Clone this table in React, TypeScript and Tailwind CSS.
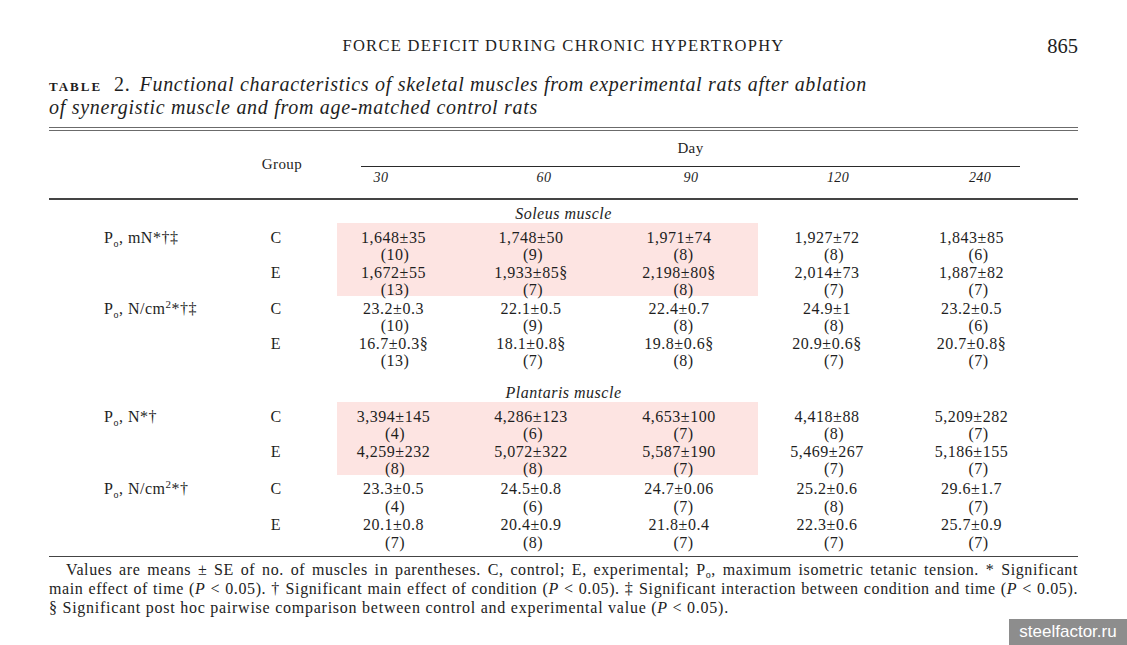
import React from "react";

type Cell = { v: string; n: string };
type Block = { label: React.ReactNode; pink: boolean; c: Cell[]; e: Cell[] };

const Po = () => (
  <>
    P<sub className="text-[10px] align-[-2px]">o</sub>
  </>
);

const blocksSoleus: Block[] = [
  {
    label: (
      <>
        <Po />, mN*†‡
      </>
    ),
    pink: true,
    c: [
      { v: "1,648±35", n: "(10)" },
      { v: "1,748±50", n: "(9)" },
      { v: "1,971±74", n: "(8)" },
      { v: "1,927±72", n: "(8)" },
      { v: "1,843±85", n: "(6)" },
    ],
    e: [
      { v: "1,672±55", n: "(13)" },
      { v: "1,933±85§", n: "(7)" },
      { v: "2,198±80§", n: "(8)" },
      { v: "2,014±73", n: "(7)" },
      { v: "1,887±82", n: "(7)" },
    ],
  },
  {
    label: (
      <>
        <Po />, N/cm<sup className="text-[11px]">2</sup>*†‡
      </>
    ),
    pink: false,
    c: [
      { v: "23.2±0.3", n: "(10)" },
      { v: "22.1±0.5", n: "(9)" },
      { v: "22.4±0.7", n: "(8)" },
      { v: "24.9±1", n: "(8)" },
      { v: "23.2±0.5", n: "(6)" },
    ],
    e: [
      { v: "16.7±0.3§", n: "(13)" },
      { v: "18.1±0.8§", n: "(7)" },
      { v: "19.8±0.6§", n: "(8)" },
      { v: "20.9±0.6§", n: "(7)" },
      { v: "20.7±0.8§", n: "(7)" },
    ],
  },
];

const blocksPlantaris: Block[] = [
  {
    label: (
      <>
        <Po />, N*†
      </>
    ),
    pink: true,
    c: [
      { v: "3,394±145", n: "(4)" },
      { v: "4,286±123", n: "(6)" },
      { v: "4,653±100", n: "(7)" },
      { v: "4,418±88", n: "(8)" },
      { v: "5,209±282", n: "(7)" },
    ],
    e: [
      { v: "4,259±232", n: "(8)" },
      { v: "5,072±322", n: "(8)" },
      { v: "5,587±190", n: "(7)" },
      { v: "5,469±267", n: "(7)" },
      { v: "5,186±155", n: "(7)" },
    ],
  },
  {
    label: (
      <>
        <Po />, N/cm<sup className="text-[11px]">2</sup>*†
      </>
    ),
    pink: false,
    c: [
      { v: "23.3±0.5", n: "(4)" },
      { v: "24.5±0.8", n: "(6)" },
      { v: "24.7±0.06", n: "(7)" },
      { v: "25.2±0.6", n: "(8)" },
      { v: "29.6±1.7", n: "(7)" },
    ],
    e: [
      { v: "20.1±0.8", n: "(7)" },
      { v: "20.4±0.9", n: "(8)" },
      { v: "21.8±0.4", n: "(7)" },
      { v: "22.3±0.6", n: "(7)" },
      { v: "25.7±0.9", n: "(7)" },
    ],
  },
];

// widths of the five day columns (first three sit inside the pink box)
const colW = ["w-[113px]", "w-[162px]", "w-[134px]", "w-[138px]", "w-[151px]"];
const countPad = ["pl-[3px]", "pl-[4px]", "pl-[9px]", "pl-[14px]", "pl-[14px]"];

function DataCol({ i, b }: { i: number; b: Block }) {
  return (
    <div className={`${colW[i]} flex flex-col items-center`}>
      <div>{b.c[i].v}</div>
      <div className={countPad[i]}>{b.c[i].n}</div>
      <div>{b.e[i].v}</div>
      <div className={countPad[i]}>{b.e[i].n}</div>
    </div>
  );
}

function MeasureBlock({ b, className = "" }: { b: Block; className?: string }) {
  return (
    <div className={`flex items-start text-[16px] leading-[17.5px] tracking-[0.5px] ${className}`}>
      <div className="w-[181px] pl-[55px] whitespace-nowrap">{b.label}</div>
      <div className="w-[92px] flex flex-col items-center">
        <div>C</div>
        <div>&nbsp;</div>
        <div>E</div>
        <div>&nbsp;</div>
      </div>
      <div
        className={`ml-[15px] flex items-start pr-[12px] ${
          b.pink ? "bg-[#fde4e2] -mt-[6px] pt-[6px] h-[73px]" : ""
        }`}
      >
        <DataCol i={0} b={b} />
        <DataCol i={1} b={b} />
        <DataCol i={2} b={b} />
      </div>
      <DataCol i={3} b={b} />
      <DataCol i={4} b={b} />
    </div>
  );
}

export default function App() {
  return (
    <div className="w-[1127px] h-[645px] bg-white relative overflow-hidden font-['Liberation_Serif',serif] text-[#1e1e1e]">
      <div className="pl-[49px] w-[1078px]">
        {/* Running head */}
        <div className="pt-[36px] flex items-center h-[56px]">
          <div className="flex-1 text-center text-[16.5px] leading-[20px] tracking-[1.3px]">
            FORCE DEFICIT DURING CHRONIC HYPERTROPHY
          </div>
          <div className="text-[20.5px] leading-[20px] absolute right-[49px] top-[36px]">865</div>
        </div>

        {/* Caption */}
        <div className="mt-[18px] text-[20px] leading-[21px] tracking-[0.7px]">
          <div className="whitespace-nowrap flex items-baseline">
            <span className="uppercase font-bold text-[13px] tracking-[2px]">Table</span>
            <span className="ml-[12px]">2.</span>
            <i className="ml-[9px]">Functional characteristics of skeletal muscles from experimental rats after ablation</i>
          </div>
          <div className="italic whitespace-nowrap">of synergistic muscle and from age-matched control rats</div>
        </div>

        {/* double rule */}
        <div className="mt-[9px] h-[4px] border-y border-[#6b6b6b]" />

        {/* Column heads */}
        <div className="flex h-[67px]">
          <div className="w-[181px]" />
          <div className="w-[92px] flex items-center justify-center pl-[12px] text-[15px] tracking-[0.4px]">
            Group
          </div>
          <div className="ml-[39px] w-[659px] flex flex-col">
            <div className="pt-[8px] text-center text-[15px] leading-[18px] tracking-[0.4px]">Day</div>
            <div className="mt-[9px] h-px bg-[#2a2a2a]" />
            <div className="mt-[2px] flex italic text-[14px] leading-[18px] tracking-[0.4px]">
              <span className="w-[40px] text-center">30</span>
              <span className="ml-[123px] w-[40px] text-center">60</span>
              <span className="ml-[107px] w-[40px] text-center">90</span>
              <span className="ml-[107px] w-[40px] text-center">120</span>
              <span className="ml-[102px] w-[40px] text-center">240</span>
            </div>
          </div>
        </div>
        <div className="h-[1.5px] bg-[#444]" />

        {/* Soleus */}
        <div className="mt-[5px] text-center italic text-[16px] leading-[18px] tracking-[0.5px]">Soleus muscle</div>
        <MeasureBlock b={blocksSoleus[0]} className="mt-[6px]" />
        <MeasureBlock b={blocksSoleus[1]} className="mt-[1px]" />

        {/* Plantaris */}
        <div className="mt-[14px] text-center italic text-[16px] leading-[18px] tracking-[0.5px]">
          Plantaris muscle
        </div>
        <MeasureBlock b={blocksPlantaris[0]} className="mt-[6px]" />
        <MeasureBlock b={blocksPlantaris[1]} className="mt-[2px] leading-[18px]" />

        <div className="mt-[4px] h-[1.5px] bg-[#444]" />

        {/* Footnote */}
        <div className="mt-[3px] text-[16px] leading-[19px] tracking-[0.6px] text-[#222]">
          <div className="pl-[17px] text-justify [text-align-last:justify]">
            Values are means ± SE of no. of muscles in parentheses. C, control; E, experimental; P
            <sub className="text-[10px]">o</sub>, maximum isometric tetanic tension. * Significant
          </div>
          <div className="text-justify [text-align-last:justify]">
            main effect of time (<i>P</i> &lt; 0.05). † Significant main effect of condition (<i>P</i> &lt; 0.05). ‡
            Significant interaction between condition and time (<i>P</i> &lt; 0.05).
          </div>
          <div className="tracking-[0.75px]">
            § Significant post hoc pairwise comparison between control and experimental value (<i>P</i> &lt; 0.05).
          </div>
        </div>
      </div>

      {/* watermark */}
      <div className="absolute right-0 bottom-0 w-[118px] h-[26px] bg-[#8d8d8d] flex items-center justify-center font-['Liberation_Sans',sans-serif] text-[17px] text-white">
        steelfactor.ru
      </div>
    </div>
  );
}
